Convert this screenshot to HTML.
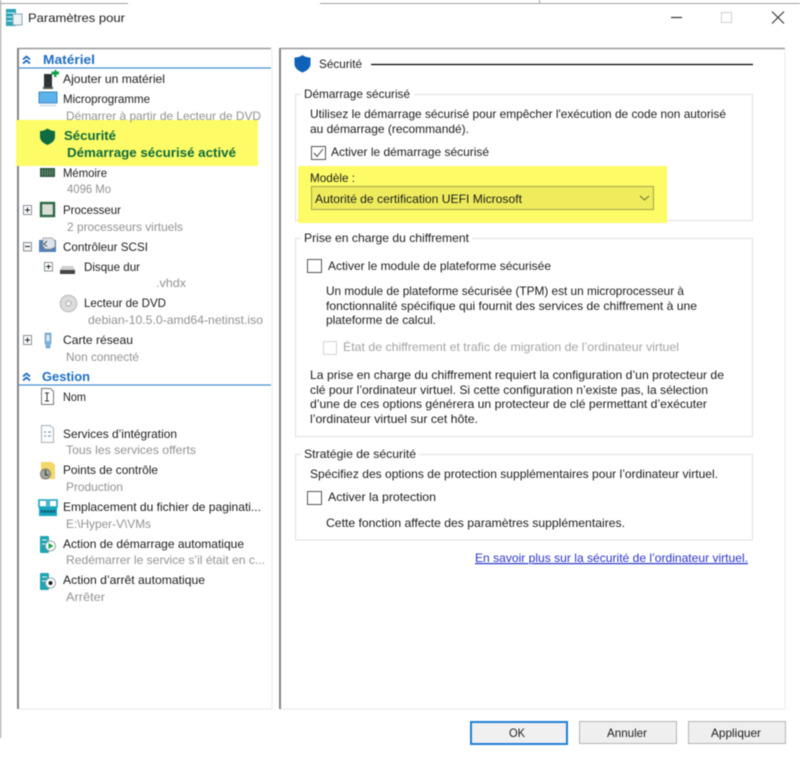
<!DOCTYPE html>
<html lang="fr">
<head>
<meta charset="utf-8">
<title>Paramètres pour</title>
<style>
html,body{margin:0;padding:0;background:#fff;width:800px;height:758px;overflow:hidden}
svg{display:block;filter:blur(0.45px)}
text{font-family:"Liberation Sans",sans-serif;font-size:12px;fill:#1c1c1c}
.g{fill:#929292}
.h{font-weight:bold;fill:#1f6fc4;font-size:13px}
.s{font-weight:bold;fill:#0f6b3c;font-size:13px}
.d{fill:#a4a4a4}
.l{fill:#2a35c8;text-decoration:underline}
</style>
</head>
<body>
<svg width="800" height="758" viewBox="0 0 800 758" xmlns="http://www.w3.org/2000/svg">
<rect width="800" height="758" fill="#fff"/>

<!-- window edges -->
<path d="M0 3.5H128M320 3.5H800" stroke="#a0a0a0"/>
<path d="M539.5 0V3" stroke="#a0a0a0"/>
<path d="M0.5 0V738" stroke="#a8a8a8" stroke-width="1.4"/>

<!-- title -->
<g>
<rect x="6" y="9" width="10" height="17" fill="#2aa6b8"/>
<path d="M7 13h8M7 17h8M7 21h8" stroke="#d8f2f5"/>
<rect x="13" y="14" width="9" height="11" fill="#eef3f7" stroke="#8aa4b5"/>
</g>
<text x="28" y="22" textLength="97" lengthAdjust="spacingAndGlyphs">Paramètres pour</text>

<!-- window controls -->
<path d="M671 17.5H682" stroke="#333" stroke-width="1.2"/>
<rect x="721.5" y="12.5" width="10" height="10" fill="#fff" stroke="#d0d0d0"/>
<path d="M772 11.5L784 23.5M784 11.5L772 23.5" stroke="#333" stroke-width="1.1"/>

<!-- left pane -->
<path d="M18 48.5H271" stroke="#999" stroke-width="1.4"/>
<path d="M18 48V709" stroke="#858585" stroke-width="2"/>
<path d="M19 709H272" stroke="#e8e8e8"/>
<path d="M272 49V709" stroke="#ececec"/>

<!-- right pane -->
<path d="M280 48.5H785" stroke="#999" stroke-width="1.4"/>
<path d="M280 48V709" stroke="#858585" stroke-width="2"/>
<path d="M281 709H785" stroke="#e8e8e8"/>
<path d="M785 49V709" stroke="#ececec"/>

<!-- highlight left -->
<rect x="16" y="120" width="242" height="46" fill="#fdfb66"/>

<!-- Materiel -->
<path d="M23 59.5l3.5-3 3.5 3M23 63.5l3.5-3 3.5 3" fill="none" stroke="#1565c0" stroke-width="1.8"/>
<text class="h" x="43" y="64" textLength="52" lengthAdjust="spacingAndGlyphs">Matériel</text>
<path d="M18 68H271" stroke="#4a90d0" stroke-width="1.2"/>

<!-- add hardware -->
<rect x="44" y="74" width="8" height="13" fill="#2d3436"/>
<rect x="43" y="87" width="10" height="2" fill="#555"/>
<path d="M51.5 71.5h3v-1.500h2v1.500h2.500v3h-2.500v2.500h-2.500v-2.500h-2.500z" fill="#12a04a"/>
<text x="63" y="83" textLength="102" lengthAdjust="spacingAndGlyphs">Ajouter un matériel</text>

<!-- firmware -->
<rect x="39" y="92" width="18" height="11" fill="#5db2ec" stroke="#3f88c0"/>
<path d="M40 105.500H56" stroke="#d0dbe4" stroke-width="1.500"/>
<text x="63" y="103" textLength="87" lengthAdjust="spacingAndGlyphs">Microprogramme</text>
<text class="g" x="66" y="120" textLength="195" lengthAdjust="spacingAndGlyphs">Démarrer à partir de Lecteur de DVD</text>

<!-- security -->
<path d="M47.500 128.500C44.500 130.500 42.500 131 40 131V137C40 141 44 143.500 47.500 145C51 143.500 55 141 55 137V131C52.500 131 50.500 130.500 47.500 128.500Z" fill="#0e6b42"/>
<text class="s" x="64" y="140" textLength="52" lengthAdjust="spacingAndGlyphs">Sécurité</text>
<text class="s" x="67" y="157" textLength="169" lengthAdjust="spacingAndGlyphs">Démarrage sécurisé activé</text>

<!-- memory -->
<rect x="40" y="168" width="15" height="9" fill="#2f5c42"/>
<path d="M42.500 169.500v6M45 169.500v6M47.500 169.500v6M50 169.500v6M52.500 169.500v6" stroke="#6f9079"/>
<text x="63" y="177" textLength="44" lengthAdjust="spacingAndGlyphs">Mémoire</text>
<text class="g" x="67" y="193" textLength="44" lengthAdjust="spacingAndGlyphs">4096 Mo</text>

<!-- processor -->
<rect x="23.500" y="205.500" width="8" height="9" fill="#fff" stroke="#8a8f98"/>
<path d="M25 210h5M27.500 207.500v5" stroke="#222"/>
<rect x="41" y="203" width="13" height="13" fill="#d9ded9" stroke="#2c6a45" stroke-width="2.400"/>
<text x="63" y="214" textLength="58" lengthAdjust="spacingAndGlyphs">Processeur</text>
<text class="g" x="67" y="231" textLength="116" lengthAdjust="spacingAndGlyphs">2 processeurs virtuels</text>

<!-- scsi -->
<rect x="23.500" y="242.500" width="8" height="8.500" fill="#f4f4f4" stroke="#8a8f98"/>
<path d="M25 246.500h5" stroke="#222"/>
<path d="M39 240h17v12H39z" fill="#5580b4"/>
<path d="M43 238h9l3 3v6l-4 2h-6l-2-3z" fill="#dfe4ea" stroke="#8c9298" stroke-width=".7"/>
<path d="M47 241l-3 3 3 2.500" fill="none" stroke="#555"/>
<text x="63" y="251" textLength="85" lengthAdjust="spacingAndGlyphs">Contrôleur SCSI</text>

<!-- disk -->
<rect x="44.500" y="262.500" width="8" height="8.500" fill="#fff" stroke="#8a8f98"/>
<path d="M46 266.500h5M48.500 264.500v4.500" stroke="#222"/>
<path d="M62 266h11l2 4v4H60v-4z" fill="#cfcfcf"/>
<rect x="60" y="270" width="15" height="4" fill="#444"/>
<text x="84" y="271" textLength="56" lengthAdjust="spacingAndGlyphs">Disque dur</text>
<text class="g" x="156" y="287" textLength="30" lengthAdjust="spacingAndGlyphs">.vhdx</text>

<!-- dvd -->
<circle cx="68.500" cy="303.500" r="8.300" fill="#dcdcdc" stroke="#b8b8b8"/>
<circle cx="68.500" cy="303.500" r="2.500" fill="#f6f6f6" stroke="#aaa"/>
<text x="84" y="307" textLength="82" lengthAdjust="spacingAndGlyphs">Lecteur de DVD</text>
<text class="g" x="88" y="324" textLength="175" lengthAdjust="spacingAndGlyphs">debian-10.5.0-amd64-netinst.iso</text>

<!-- nic -->
<rect x="23.500" y="335.500" width="8" height="9" fill="#fff" stroke="#8a8f98"/>
<path d="M25 340h5M27.500 337.500v5" stroke="#222"/>
<path d="M45 333h6v11h-1v4h-4v-4h-1z" fill="#7fb3dd" stroke="#6a93b8" stroke-width=".6"/>
<rect x="46.500" y="335" width="3" height="6" fill="#dfeaf3"/>
<text x="63" y="344" textLength="70" lengthAdjust="spacingAndGlyphs">Carte réseau</text>
<text class="g" x="66" y="361" textLength="73" lengthAdjust="spacingAndGlyphs">Non connecté</text>

<!-- Gestion -->
<path d="M23 376.500l3.500-3 3.500 3M23 380.500l3.500-3 3.500 3" fill="none" stroke="#1565c0" stroke-width="1.800"/>
<text class="h" x="42" y="381" textLength="48" lengthAdjust="spacingAndGlyphs">Gestion</text>
<path d="M18 385H271" stroke="#4a90d0" stroke-width="1.200"/>

<!-- name -->
<path d="M41.500 388.500h9l3 3v13h-12z" fill="#fff" stroke="#777"/>
<path d="M45 393h4M47 393v8M45 401h4" fill="none" stroke="#333"/>
<text x="63" y="401" textLength="23" lengthAdjust="spacingAndGlyphs">Nom</text>

<!-- integration -->
<path d="M41.500 425.500h9l3 3v14h-12z" fill="#fbfcfd" stroke="#a8b0b6"/>
<path d="M44 432h2M48 432h3M44 436h2M48 436h3" stroke="#5a90b8"/>
<text x="63" y="438" textLength="114" lengthAdjust="spacingAndGlyphs">Services d’intégration</text>
<text class="g" x="66" y="454" textLength="130" lengthAdjust="spacingAndGlyphs">Tous les services offerts</text>

<!-- checkpoints -->
<path d="M41 462h11l3 3v14H41z" fill="#f3d768"/>
<circle cx="45.500" cy="474" r="5" fill="#a8a8a0" stroke="#7d7d75"/>
<path d="M45.500 470v5h3" fill="none" stroke="#3f5a3f" stroke-width="1.500"/>
<text x="63" y="474" textLength="95" lengthAdjust="spacingAndGlyphs">Points de contrôle</text>
<text class="g" x="66" y="491" textLength="57" lengthAdjust="spacingAndGlyphs">Production</text>

<!-- paging -->
<path d="M39 500h8v7h-8zM49 500h8v7h-8z" fill="#fff" stroke="#1aa5bd" stroke-width="1.600"/>
<rect x="39" y="507" width="18" height="9" fill="#17a7bf"/>
<path d="M41 511.500h14" stroke="#0f4f62" stroke-width="2.500" stroke-dasharray="2 1"/>
<text x="63" y="511" textLength="198" lengthAdjust="spacingAndGlyphs">Emplacement du fichier de paginati...</text>
<text class="g" x="66" y="528" textLength="85" lengthAdjust="spacingAndGlyphs">E:\Hyper-V\VMs</text>

<!-- autostart -->
<rect x="40" y="536" width="9" height="17" rx="1" fill="#1ea4b3"/>
<path d="M42 540h5M42 544h5" stroke="#e2f6f8"/>
<circle cx="50.500" cy="546" r="5" fill="#fff" stroke="#9aa5a8"/>
<path d="M48.500 543l5 3-5 3z" fill="#22a34a"/>
<text x="63" y="548" textLength="181" lengthAdjust="spacingAndGlyphs">Action de démarrage automatique</text>
<text class="g" x="66" y="564" textLength="199" lengthAdjust="spacingAndGlyphs">Redémarrer le service s’il était en c...</text>

<!-- autostop -->
<rect x="40" y="573" width="9" height="17" rx="1" fill="#1ea4b3"/>
<path d="M42 577h5M42 581h5" stroke="#e2f6f8"/>
<circle cx="50.500" cy="583" r="5" fill="#fff" stroke="#9aa5a8"/>
<circle cx="50.500" cy="583" r="2" fill="#222"/>
<text x="63" y="584" textLength="142" lengthAdjust="spacingAndGlyphs">Action d’arrêt automatique</text>
<text class="g" x="66" y="601" textLength="39" lengthAdjust="spacingAndGlyphs">Arrêter</text>

<!-- right header -->
<path d="M302.500 55C300 56.800 298 57.500 294.500 57.500V64C294.500 68 298.500 71 302.500 72.500C306.500 71 310.500 68 310.500 64V57.500C307 57.500 305 56.800 302.500 55Z" fill="#0f62b8"/>
<text x="319" y="68" textLength="43" lengthAdjust="spacingAndGlyphs">Sécurité</text>
<path d="M371 64.500H753" stroke="#000" stroke-width="1.200"/>

<!-- group 1 -->
<rect x="295.500" y="94.500" width="457" height="126" fill="none" stroke="#e0e0e0"/>
<rect x="298" y="166" width="369" height="57" fill="#fdfb66"/>
<rect x="301" y="90" width="113" height="10" fill="#fff"/>
<text x="304" y="98" textLength="106" lengthAdjust="spacingAndGlyphs">Démarrage sécurisé</text>
<text x="310" y="118" textLength="416" lengthAdjust="spacingAndGlyphs">Utilisez le démarrage sécurisé pour empêcher l'exécution de code non autorisé</text>
<text x="310" y="133" textLength="159" lengthAdjust="spacingAndGlyphs">au démarrage (recommandé).</text>
<rect x="311.500" y="146.500" width="14" height="13" fill="#fff" stroke="#555"/>
<path d="M314 153l3 3.500 6-7.500" fill="none" stroke="#444" stroke-width="1"/>
<text x="331" y="156" textLength="158" lengthAdjust="spacingAndGlyphs">Activer le démarrage sécurisé</text>
<text x="310" y="182" textLength="45" lengthAdjust="spacingAndGlyphs">Modèle :</text>
<rect x="311.500" y="186.500" width="342" height="23" fill="#eeec5c" stroke="#a3a350"/>
<text x="315" y="203" textLength="207" lengthAdjust="spacingAndGlyphs">Autorité de certification UEFI Microsoft</text>
<path d="M640 196l4.500 4 4.500-4" fill="none" stroke="#66663a" stroke-width="1"/>

<!-- group 2 -->
<rect x="295.500" y="238.500" width="457" height="198" fill="none" stroke="#e0e0e0"/>
<rect x="301" y="233" width="171" height="10" fill="#fff"/>
<text x="304" y="242" textLength="165" lengthAdjust="spacingAndGlyphs">Prise en charge du chiffrement</text>
<rect x="307.500" y="259.500" width="14" height="13" fill="#fff" stroke="#555"/>
<text x="328" y="270" textLength="223" lengthAdjust="spacingAndGlyphs">Activer le module de plateforme sécurisée</text>
<text x="326" y="295" textLength="358" lengthAdjust="spacingAndGlyphs">Un module de plateforme sécurisée (TPM) est un microprocesseur à</text>
<text x="326" y="310" textLength="371" lengthAdjust="spacingAndGlyphs">fonctionnalité spécifique qui fournit des services de chiffrement à une</text>
<text x="326" y="324" textLength="110" lengthAdjust="spacingAndGlyphs">plateforme de calcul.</text>
<rect x="323.500" y="341.500" width="13" height="13" fill="#fff" stroke="#d2d2d2"/>
<text class="d" x="343" y="351" textLength="336" lengthAdjust="spacingAndGlyphs">État de chiffrement et trafic de migration de l’ordinateur virtuel</text>
<text x="310" y="379" textLength="414" lengthAdjust="spacingAndGlyphs">La prise en charge du chiffrement requiert la configuration d’un protecteur de</text>
<text x="310" y="394" textLength="398" lengthAdjust="spacingAndGlyphs">clé pour l’ordinateur virtuel. Si cette configuration n’existe pas, la sélection</text>
<text x="310" y="408" textLength="397" lengthAdjust="spacingAndGlyphs">d’une de ces options générera un protecteur de clé permettant d’exécuter</text>
<text x="310" y="423" textLength="168" lengthAdjust="spacingAndGlyphs">l’ordinateur virtuel sur cet hôte.</text>

<!-- group 3 -->
<rect x="295.500" y="454.500" width="457" height="85.500" fill="none" stroke="#e0e0e0"/>
<rect x="301" y="449" width="118" height="10" fill="#fff"/>
<text x="304" y="458" textLength="112" lengthAdjust="spacingAndGlyphs">Stratégie de sécurité</text>
<text x="310" y="478" textLength="408" lengthAdjust="spacingAndGlyphs">Spécifiez des options de protection supplémentaires pour l’ordinateur virtuel.</text>
<rect x="307.500" y="491.500" width="14" height="13" fill="#fff" stroke="#555"/>
<text x="328" y="501" textLength="108" lengthAdjust="spacingAndGlyphs">Activer la protection</text>
<text x="326" y="527" textLength="299" lengthAdjust="spacingAndGlyphs">Cette fonction affecte des paramètres supplémentaires.</text>
<text class="l" x="475" y="562" textLength="273" lengthAdjust="spacingAndGlyphs">En savoir plus sur la sécurité de l’ordinateur virtuel.</text>

<!-- buttons -->
<rect x="471" y="722" width="96" height="22" fill="#f0f0f0" stroke="#1f7fd6" stroke-width="2"/>
<text x="509" y="737" textLength="16" lengthAdjust="spacingAndGlyphs">OK</text>
<rect x="579.500" y="721.500" width="97" height="22" fill="#efefef" stroke="#b4b4b4"/>
<text x="607" y="737" textLength="40" lengthAdjust="spacingAndGlyphs">Annuler</text>
<rect x="688.500" y="721.500" width="97" height="22" fill="#efefef" stroke="#b4b4b4"/>
<text x="711" y="737" textLength="50" lengthAdjust="spacingAndGlyphs">Appliquer</text>
</svg>
</body>
</html>
